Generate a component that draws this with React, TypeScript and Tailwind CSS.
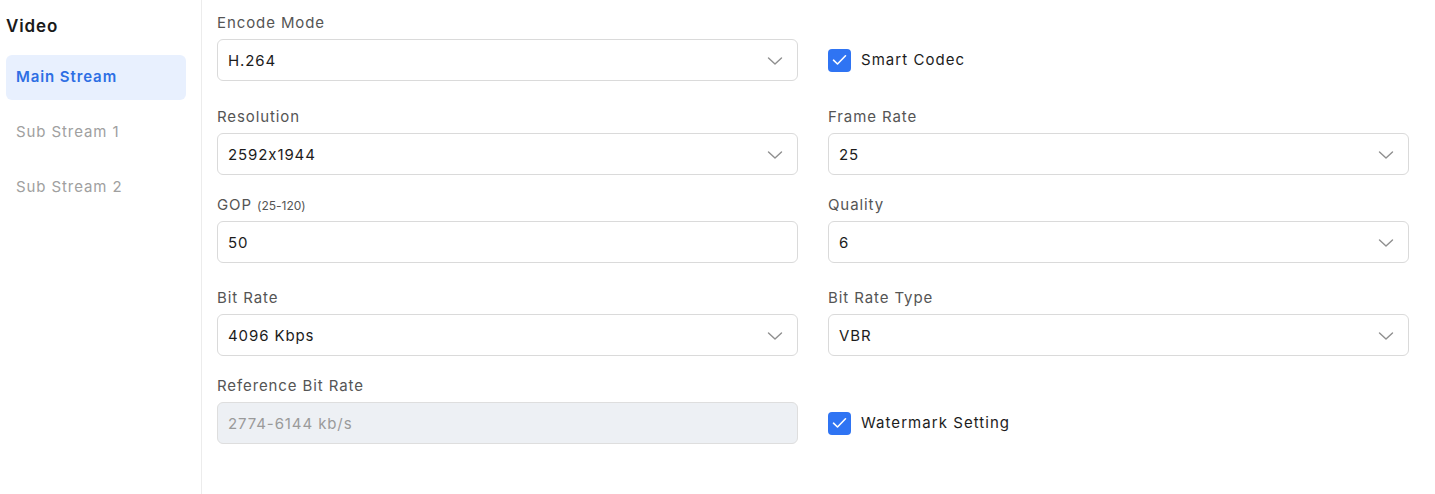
import React from "react";

const font = { fontFamily: "Inter, 'Noto Sans', sans-serif" };

function Chevron() {
  return (
    <svg width="16" height="10" viewBox="0 0 16 10" fill="none" className="shrink-0">
      <path d="M1.5 2 L8 8 L14.5 2" stroke="#8f8f8f" strokeWidth="1.4" strokeLinecap="round" strokeLinejoin="round" />
    </svg>
  );
}

function Label({ children }: { children: React.ReactNode }) {
  return <div className="h-[20px] text-[15px] leading-[20px] tracking-[0.06em] text-[#555555] mb-[6px] whitespace-nowrap">{children}</div>;
}

function Select({ value }: { value: string }) {
  return (
    <div className="h-[42px] rounded-[6px] border border-[#dadada] bg-white flex items-center justify-between pl-[10px] pr-[14px] pt-[2px]">
      <span className="text-[15px] tracking-[0.06em] text-[#1c1c1c]">{value}</span>
      <Chevron />
    </div>
  );
}

function Input({ value, disabled }: { value: string; disabled?: boolean }) {
  return (
    <div
      className={
        "h-[42px] rounded-[6px] border flex items-center pl-[10px] pt-[2px] " +
        (disabled ? "bg-[#edf0f4] border-[#dedede]" : "bg-white border-[#dadada]")
      }
    >
      <span className={"text-[15px] tracking-[0.06em] " + (disabled ? "text-[#9a9a9a]" : "text-[#1c1c1c]")}>{value}</span>
    </div>
  );
}

function Check({ label }: { label: string }) {
  return (
    <div className="h-[42px] flex items-center gap-[10px]">
      <div className="w-[23px] h-[23px] rounded-[4px] bg-[#2f74f3] flex items-center justify-center">
        <svg width="15" height="12" viewBox="0 0 15 12" fill="none">
          <path d="M1.5 6.2 L5.5 10 L13.5 1.8" stroke="white" strokeWidth="1.6" strokeLinecap="round" strokeLinejoin="round" />
        </svg>
      </div>
      <span className="text-[15px] tracking-[0.07em] text-[#1c1c1c]">{label}</span>
    </div>
  );
}

export default function App() {
  return (
    <div className="flex min-h-screen h-[494px] bg-white [font-feature-settings:'calt'_0]" style={font}>
      <aside className="w-[202px] shrink-0 border-r border-[#ececec] pl-[6px] pr-[15px] pt-[15px]">
        <div className="text-[17px] font-semibold tracking-[0.05em] text-[#1a1a1a] leading-[22px]">Video</div>
        <nav className="mt-[18px] flex flex-col gap-[10px]">
          <div className="h-[45px] rounded-[6px] bg-[#e8f0fe] flex items-center pl-[10px] text-[15px] font-semibold tracking-[0.06em] text-[#2e6fe4]">
            Main Stream
          </div>
          <div className="h-[45px] flex items-center pl-[10px] text-[15px] tracking-[0.06em] text-[#a0a0a0]">Sub Stream 1</div>
          <div className="h-[45px] flex items-center pl-[10px] text-[15px] tracking-[0.06em] text-[#a0a0a0]">Sub Stream 2</div>
        </nav>
      </aside>
      <main className="flex-1 pl-[15px] pr-[26px] pt-[13px]">
        <div className="grid grid-cols-2 gap-x-[30px]">
          <div>
            <Label>Encode Mode</Label>
            <Select value="H.264" />
          </div>
          <div className="flex flex-col justify-end">
            <Check label="Smart Codec" />
          </div>

          <div className="mt-[26px]">
            <Label>Resolution</Label>
            <Select value="2592x1944" />
          </div>
          <div className="mt-[26px]">
            <Label>Frame Rate</Label>
            <Select value="25" />
          </div>

          <div className="mt-[20px]">
            <Label>
              GOP <span className="text-[12px] tracking-normal">(25-120)</span>
            </Label>
            <Input value="50" />
          </div>
          <div className="mt-[20px]">
            <Label>Quality</Label>
            <Select value="6" />
          </div>

          <div className="mt-[25px]">
            <Label>Bit Rate</Label>
            <Select value="4096 Kbps" />
          </div>
          <div className="mt-[25px]">
            <Label>Bit Rate Type</Label>
            <Select value="VBR" />
          </div>

          <div className="mt-[20px]">
            <Label>Reference Bit Rate</Label>
            <Input value="2774-6144 kb/s" disabled />
          </div>
          <div className="mt-[20px] flex flex-col justify-end">
            <Check label="Watermark Setting" />
          </div>
        </div>
      </main>
    </div>
  );
}
